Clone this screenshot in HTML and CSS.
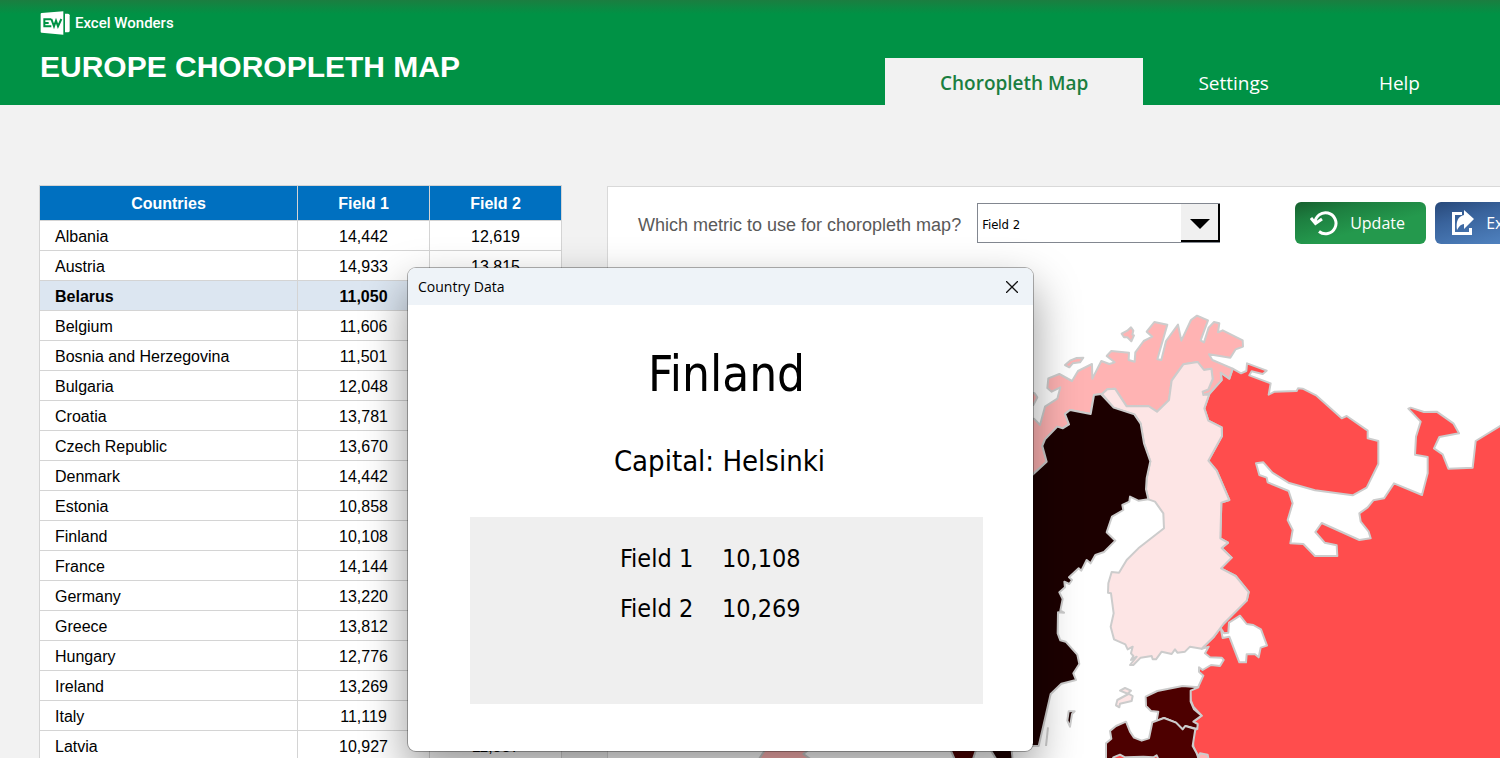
FILE: index.html
```html
<!DOCTYPE html>
<html lang="en">
<head>
    <meta charset="UTF-8">
    <meta name="viewport" content="width=device-width, initial-scale=1.0">
    <title>Europe Choropleth Map - Excel Wonders</title>
    <link rel="stylesheet" href="styles.css">
</head>
<body>
    <header>
        <div class="brand">
            <div class="logo">
                <svg class="logo-icon" viewBox="0 0 90 70" aria-hidden="true">
                    <path fill="#fff" d="M5 5 70 0V70L5 64Q2 64 2 61V8Q2 5 5 5Z"/>
                    <path fill="#fff" d="M75 7H84Q89 7 89 12V58Q89 63 84 63H75Z"/>
                    <path fill="none" stroke="#009245" stroke-width="6" d="M34 24H13V45H34M13 35H26M34 23 42 45 48 28 54 45 64 23"/>
                </svg>
                <span>Excel Wonders</span>
            </div>
            <h1>EUROPE CHOROPLETH MAP</h1>
        </div>
        <nav class="tabs">
            <a class="tab active" href="#map">Choropleth Map</a>
            <a class="tab" href="#settings">Settings</a>
            <a class="tab" href="#help">Help</a>
        </nav>
    </header>

    <main>
        <table class="countries">
            <thead>
                <tr><th class="col-name">Countries</th><th>Field 1</th><th>Field 2</th></tr>
            </thead>
            <tbody>
                <tr><td>Albania</td><td>14,442</td><td>12,619</td></tr>
                <tr><td>Austria</td><td>14,933</td><td>13,815</td></tr>
                <tr class="selected"><td>Belarus</td><td>11,050</td><td></td></tr>
                <tr><td>Belgium</td><td>11,606</td><td></td></tr>
                <tr><td>Bosnia and Herzegovina</td><td>11,501</td><td></td></tr>
                <tr><td>Bulgaria</td><td>12,048</td><td></td></tr>
                <tr><td>Croatia</td><td>13,781</td><td></td></tr>
                <tr><td>Czech Republic</td><td>13,670</td><td></td></tr>
                <tr><td>Denmark</td><td>14,442</td><td></td></tr>
                <tr><td>Estonia</td><td>10,858</td><td></td></tr>
                <tr><td>Finland</td><td>10,108</td><td>10,269</td></tr>
                <tr><td>France</td><td>14,144</td><td></td></tr>
                <tr><td>Germany</td><td>13,220</td><td></td></tr>
                <tr><td>Greece</td><td>13,812</td><td></td></tr>
                <tr><td>Hungary</td><td>12,776</td><td></td></tr>
                <tr><td>Ireland</td><td>13,269</td><td></td></tr>
                <tr><td>Italy</td><td>11,119</td><td></td></tr>
                <tr><td>Latvia</td><td>10,927</td><td>11,987</td></tr>
            </tbody>
        </table>

        <section class="map-panel">
            <div class="toolbar">
                <label for="metric">Which metric to use for choropleth map?</label>
                <div class="select-box">
                    <select id="metric">
                        <option>Field 1</option>
                        <option selected>Field 2</option>
                    </select>
                    <span class="select-arrow"></span>
                </div>
                <button class="btn btn-update" type="button">
                    <svg viewBox="0 0 28 26" aria-hidden="true">
                        <path fill="none" stroke="#fff" stroke-width="3" d="M5 13A10.500 10.500 0 1 1 9 21.500M1 8 5.500 13.500 12 9"/>
                    </svg>
                    Update
                </button>
                <button class="btn btn-export" type="button">
                    <svg viewBox="0 0 28 26" aria-hidden="true">
                        <path fill="none" stroke="#fff" stroke-width="3" d="M12 3.500H3.500V23.500H20.500V18"/>
                        <path fill="#fff" d="M14 0 24 9 14 19V14Q10 14 7 20 5 7 14 5Z"/>
                    </svg>
                    Export
                </button>
            </div>

            <svg class="map" viewBox="-1236 -114 2676 1488" role="img" aria-label="Map of Europe">
                <!-- Russia -->
                <path class="level-3" d="M602 218 628 236 638 206 663 220 679 213 681 190 740 212 728 222 695 214 688 226 752 250 746 284 764 275 830 273 834 265 848 266 888 286 965 355 980 348 1043 392 1043 415 1075 423 1075 492 1040 563 998 586 885 571 805 548 757 518 730 487 708 490 718 525 740 533 743 547 806 573 818 610 803 660 818 690 811 730 850 732 885 768 952 768 950 736 914 728 886 696 905 669 1018 720 1052 715 1046 695 1022 665 1018 640 1043 622 1060 601 1092 595 1122 550 1206 585 1223 520 1223 471 1185 464 1188 410 1202 365 1165 326 1172 323 1212 336 1250 335 1300 370 1317 400 1258 411 1242 445 1268 463 1285 506 1358 503 1367 423 1440 378 1470 360V1400H570L530 1360 520 1340 518 1310 528 1286 532 1276 520 1265 545 1247 520 1220 512 1200 510 1170 535 1160 550 1127 537 1115 537 1102 548 1110 573 1095 600 1098 611 1080 605 1073 570 1072 555 1060 566 1040 545 1046 580 1012 600 985 610 972 680 902 686 876 647 828 603 805 635 773 605 744 624 728 601 715 604 608 628 600 590 512 565 482 606 408 605 382 565 362 553 325 568 282 605 240Z"/>
                <path class="water" d="M602 984 608 1014 628 1010 658 1087 678 1087 680 1063 705 1063 716 1072 722 1043 741 1037 723 988 700 975 680 972 660 947 627 968 625 998 612 1000Z"/>
                <!-- Norway -->
                <path class="level-2" d="M0 360 42 356 60 375 75 320 112 296 121 262 95 275 82 264 85 235 118 222 156 243 174 213 216 192 217 236 244 183 268 192 284 187 260 168 274 153 327 158 326 180 344 185 346 157 371 123 397 110 380 95 403 66 442 74 412 178 424 180 438 123 474 74 484 122 513 60 531 47 564 61 542 121 552 127 566 83 582 66 598 70 594 97 608 91 668 121 669 140 647 148 631 173 567 163 577 180 638 206 628 236 602 218 605 240 568 280 550 285 548 275 565 268 578 237 574 206 552 210 533 186 490 193 455 242 447 300 411 335 385 318 320 319 285 266 262 268 246 282 222 285 212 342 150 330 135 342 147 373 128 385 112 380 75 418 67 438 80 485 40 522 0 560Z"/>
                <path class="level-2" d="M305 101 322 92 333 82 340 92 337 104 342 106 334 124 322 112 312 112ZM135 195 150 182 170 174 190 173 180 187 158 190 148 202ZM36 278 44 280 52 292 40 315 36 310Z"/>
                <!-- Finland -->
                <path class="level-1" d="M246 282 262 268 285 266 320 319 385 318 411 335 447 300 455 242 490 193 533 186 552 210 574 206 578 237 565 268 548 275 550 285 568 282 553 325 565 362 605 382 606 408 565 482 590 512 628 600 604 608 601 715 624 728 605 744 635 773 603 805 647 828 686 876 680 902 610 972 580 1012 545 1046 510 1040 495 1055 472 1058 465 1048 455 1062 425 1055 408 1078 398 1078 395 1068 362 1073 340 1095 330 1095 350 1070 333 1080 340 1068 333 1060 338 1040 323 1048 316 1033 282 1018 272 980 281 940 273 880 264 878 265 850 275 816 297 818 320 780 355 745 432 685 430 640 405 605 385 598 378 568 380 535 391 484 372 430 362 371 343 343 281 323Z"/>
                <path class="level-1" d="M300 1172 315 1164 333 1172 324 1180 338 1188 335 1203 300 1211 298 1222 288 1216 292 1200 325 1182Z"/>
                <!-- Sweden -->
                <path class="level-5" d="M0 560 40 522 80 485 67 438 75 418 112 380 128 385 147 373 135 342 150 330 212 342 222 285 243 282 281 323 343 343 362 371 372 430 391 484 380 535 378 568 385 598 355 602 330 590 328 605 307 615 310 630 276 650 260 697 286 722 252 756 226 765 212 790 200 780 184 812 176 805 147 832 156 840 148 852 133 845 135 862 118 877 128 897 121 932 132 938 114 937 113 1000 121 1021 137 1025 172 1064 178 1092 160 1120 168 1140 124 1151 92 1182 56 1338H0Z"/>
                <path class="level-5" d="M146 1234 164 1234 156 1242 150 1280 142 1262Z"/>
                <path class="coast" d="M84 1282 78 1338"/>
                <!-- Estonia and Latvia -->
                <path class="level-4" d="M377 1190 412 1173 488 1158 535 1162 512 1172 512 1205 522 1228 545 1247 520 1265 533 1272 532 1287 496 1278 488 1288 468 1268 432 1254 397 1267 410 1262 415 1235 393 1233 378 1218Z"/>
                <path class="level-4" d="M258 1400V1330L274 1316 270 1293 288 1278 318 1265 330 1295 342 1313 365 1322 387 1315 397 1267 432 1254 468 1268 488 1288 496 1278 526 1287 518 1338 530 1360 545 1400Z"/>
                <path class="level-3" d="M270 1400 280 1372 300 1364 315 1372 370 1370 400 1372 410 1366 425 1400Z"/>
                <path class="level-2" d="M525 1400 540 1360 563 1364 570 1400Z"/>
                <!-- Scotland, Denmark, southern Sweden -->
                <path class="level-2" d="M-785 1380 -765 1350H-635L-650 1362 -625 1380Z"/>
                <path class="level-4" d="M-195 1380 -208 1350H-132L-142 1380Z"/>
                <path class="level-5" d="M-70 1380 -88 1350H-25L-22 1380Z"/>
            </svg>
        </section>
    </main>

    <div class="dialog" role="dialog" aria-labelledby="dialogTitle">
        <div class="dialog-bar">
            <span id="dialogTitle">Country Data</span>
            <button class="close" type="button" aria-label="Close">
                <svg viewBox="0 0 12 12" aria-hidden="true"><path stroke="#111" stroke-width="1.300" d="M0 0 12 12M12 0 0 12"/></svg>
            </button>
        </div>
        <div class="dialog-body">
            <h2>Finland</h2>
            <p class="capital">Capital: Helsinki</p>
            <dl class="fields">
                <dt>Field 1</dt><dd>10,108</dd>
                <dt>Field 2</dt><dd>10,269</dd>
            </dl>
        </div>
    </div>
</body>
</html>
```
FILE: styles.css
```css
/* General */
* {
    margin: 0;
    padding: 0;
    box-sizing: border-box;
}

html {
    overflow: hidden;
}

body {
    font-family: "Liberation Sans", Arial, sans-serif;
    background-color: #f2f2f2;
    color: #000;
    height: 100vh;
    overflow: hidden;
}

/* Header */
header {
    display: flex;
    justify-content: space-between;
    align-items: flex-end;
    height: 105px;
    padding: 0 25px 0 40px;
    background: linear-gradient(#1b7e40, #009245 14px);
    color: #fff;
}

.brand {
    align-self: flex-start;
    padding-top: 11px;
}

.logo {
    display: flex;
    align-items: center;
    gap: 5px;
    height: 24px;
    font-family: Roboto, sans-serif;
    font-size: 15px;
    font-weight: 500;
}

.logo-icon {
    width: 30px;
    height: 24px;
}

h1 {
    margin-top: 13px;
    font-size: 30px;
    line-height: 38px;
}

.tabs {
    display: flex;
    font-family: "Open Sans", sans-serif;
    font-size: 19px;
}

.tab {
    padding: 0 55px;
    line-height: 50px;
    height: 47px;
    color: #fff;
    text-decoration: none;
}

.tab.active {
    background-color: #f2f2f2;
    color: #1b7e40;
    font-weight: 600;
}

/* Page */
main {
    display: flex;
    align-items: flex-start;
    gap: 45px;
    padding: 80px 0 0 39px;
}

/* Countries table */
.countries {
    flex: none;
    width: 523px;
    table-layout: fixed;
    border-collapse: collapse;
    background-color: #fff;
    font-size: 16px;
}

.countries th,
.countries td {
    height: 30px;
    padding-top: 2px;
    border: 1px solid #d4d4d4;
    text-align: center;
}

.countries th {
    height: 35px;
    background-color: #0070c0;
    color: #fff;
}

.countries .col-name {
    width: 258px;
}

.countries td:first-child {
    padding-left: 15px;
    text-align: left;
}

.countries .selected {
    background-color: #dce6f1;
    font-weight: bold;
}

/* Map panel */
.map-panel {
    flex: 1;
    min-width: 0;
    margin-top: 1px;
    border: 1px solid #d9d9d9;
    border-right: none;
    background-color: #fff;
    overflow: hidden;
}

.toolbar {
    display: flex;
    align-items: center;
    height: 75px;
    padding: 0 0 3px 30px;
}

.toolbar > * {
    flex: none;
}

.toolbar label {
    margin-right: 16px;
    padding-top: 4px;
    font-size: 18px;
    color: #595959;
}

.select-box {
    position: relative;
    width: 243px;
    height: 40px;
    margin-right: 75px;
}

.select-box select {
    width: 100%;
    height: 100%;
    padding: 2px 40px 0 4px;
    appearance: none;
    border: 1px solid #828790;
    border-radius: 0;
    background-color: #fff;
    color: #000;
    font-family: "DejaVu Sans Condensed", "Noto Sans", sans-serif;
    font-size: 13px;
}

.select-arrow {
    position: absolute;
    top: 1px;
    right: 0;
    width: 39px;
    height: 38px;
    border: solid #000;
    border-width: 0 2px 2px 0;
    background-color: #f0f0f0;
    pointer-events: none;
}

.select-arrow::after {
    content: "";
    position: absolute;
    top: 15px;
    left: 9px;
    border: 10px solid transparent;
    border-top-color: #000;
    border-bottom: none;
}

.btn {
    display: flex;
    align-items: center;
    gap: 12px;
    width: 131px;
    height: 42px;
    margin-right: 9px;
    padding-left: 15px;
    border: none;
    border-radius: 6px;
    color: #fff;
    font-family: "Open Sans", sans-serif;
    font-size: 16px;
    cursor: pointer;
}

.btn svg {
    width: 28px;
    height: 26px;
}

.btn-update {
    background: linear-gradient(165deg, #17602f, #1d7f40 25%, #24994d 60%);
}

.btn-export {
    gap: 8px;
    background: linear-gradient(165deg, #28497a, #39639c 30%, #4e80bd 75%);
}

/* Map */
.map {
    display: block;
    width: 892px;
    height: 496px;
}

.map path {
    stroke: #ccc;
    stroke-width: 6;
    stroke-linejoin: round;
}

.level-1 { fill: #fde5e5; }
.level-2 { fill: #ffb3b3; }
.level-3 { fill: #ff4d4d; }
.level-4 { fill: #4d0000; }
.level-5 { fill: #1c0000; }
.water { fill: #fff; }
.coast { fill: none; }

/* Country dialog */
.dialog {
    position: absolute;
    top: 267px;
    left: 407px;
    width: 627px;
    height: 485px;
    border: 1px solid rgba(0, 0, 0, 0.3);
    border-radius: 9px;
    background-color: #fff;
    background-clip: padding-box;
    box-shadow: 0 20px 46px rgba(0, 0, 0, 0.4);
    overflow: hidden;
}

.dialog-bar {
    display: flex;
    justify-content: space-between;
    align-items: center;
    height: 37px;
    padding: 0 15px 0 10px;
    background-color: #eef3f8;
    font-family: "Open Sans", sans-serif;
    font-size: 14px;
}

.close {
    display: flex;
    border: none;
    background: none;
}

.close svg {
    width: 12px;
    height: 12px;
}

.dialog-body {
    padding: 36px 50px 0 62px;
    font-family: "DejaVu Sans Condensed", "Noto Sans", sans-serif;
    text-align: center;
}

.dialog-body h2 {
    font-size: 49px;
    font-weight: normal;
    line-height: 68px;
}

.capital {
    margin: 32px 14px 36px 0;
    font-size: 29px;
    line-height: 40px;
}

.fields {
    display: grid;
    grid-template-columns: 74px auto;
    grid-auto-rows: 50px;
    column-gap: 28px;
    align-items: center;
    height: 187px;
    padding: 16px 0 0 150px;
    background-color: #efefef;
    font-size: 25px;
    text-align: left;
    white-space: nowrap;
}
```
